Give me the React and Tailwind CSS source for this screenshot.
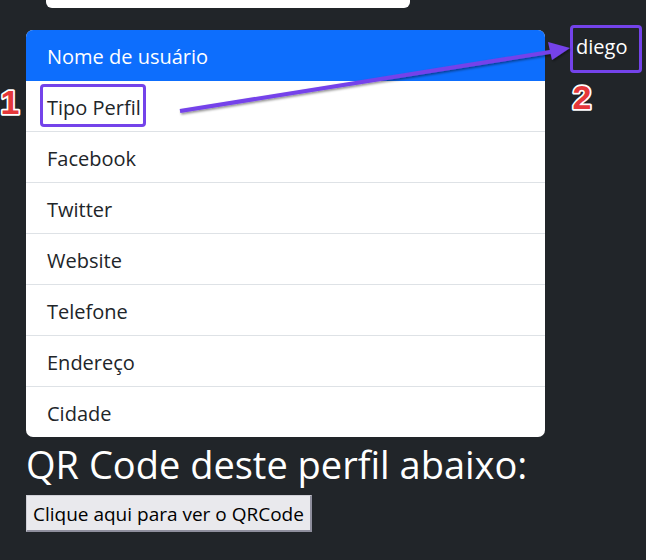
import React from 'react';

const fields = ['Tipo Perfil', 'Facebook', 'Twitter', 'Website', 'Telefone', 'Endereço', 'Cidade'];

const font = { fontFamily: '"Open Sans", "Noto Sans", sans-serif' };

// Red step number with white outline
const StepNumber = ({ n, className }) => (
    <svg className={`overflow-visible ${className}`} width="26" height="42" viewBox="0 0 26 42">
        <text
            x="13"
            y="34"
            textAnchor="middle"
            fontFamily="Liberation Sans, sans-serif"
            fontWeight="700"
            fontSize="34"
            fill="#e5373a"
            stroke="#ffffff"
            strokeWidth="3.5"
            paintOrder="stroke"
            strokeLinejoin="round"
        >
            {n}
        </text>
    </svg>
);

const App = () => {
    return (
        <div className="relative min-h-[560px] bg-[#212529] overflow-hidden" style={font}>
            {/* Field cut off at the top */}
            <div className="ml-[46px] w-[364px] h-[8px] bg-white rounded-b-[6px]" />

            <div className="flex items-start mt-[22px]">
                <ul className="ml-[26px] w-[519px] bg-white rounded-[7px] overflow-hidden text-[20px] leading-[30px] text-[#212529]">
                    <li className="px-[21px] pt-[12px] pb-[8px] bg-[#0d6efd] text-white border-b border-[#0d6efd]">
                        Nome de usuário
                    </li>
                    {fields.map((f, i) => (
                        <li
                            key={f}
                            className={`px-[21px] pt-[12px] pb-[8px] ${i < fields.length - 1 ? 'border-b border-[#dee2e6]' : ''}`}
                        >
                            {f}
                        </li>
                    ))}
                </ul>
                <div className="ml-[31px] pt-[2px] text-[20px] leading-[30px] text-white">diego</div>
            </div>

            <h2 className="ml-[26px] mt-[1px] text-[38px] leading-[52px] text-white">QR Code deste perfil abaixo:</h2>

            <button className="ml-[26px] mt-[5px] px-[6px] pt-[3px] pb-[1px] bg-[#e9e9ed] text-black text-[19px] leading-[30px] border-t border-l border-[#d0d0d7] border-r-2 border-b-2 border-r-[#8f8f9d] border-b-[#8f8f9d]">
                Clique aqui para ver o QRCode
            </button>

            {/* Annotations */}
            <div className="absolute left-[40px] top-[84px] w-[106px] h-[43px] border-[3px] border-[#7443ea] rounded-[4px]" />
            <div className="absolute left-[570px] top-[25px] w-[72px] h-[48px] border-[3px] border-[#7443ea] rounded-[4px]" />
            <StepNumber n="1" className="absolute left-[-3px] top-[80px]" />
            <StepNumber n="2" className="absolute left-[569px] top-[75px]" />
            <svg className="absolute left-0 top-0 pointer-events-none" width="646" height="560">
                <defs>
                    <filter id="sh" x="-10%" y="-50%" width="120%" height="200%">
                        <feDropShadow dx="1" dy="1.5" stdDeviation="0.8" floodColor="#000" floodOpacity="0.45" />
                    </filter>
                </defs>
                <g filter="url(#sh)">
                    <line x1="180" y1="111" x2="556" y2="51" stroke="#7443ea" strokeWidth="4" />
                    <polygon points="570,48 548,42 552,60" fill="#7443ea" />
                </g>
            </svg>
        </div>
    );
};

export default App;
